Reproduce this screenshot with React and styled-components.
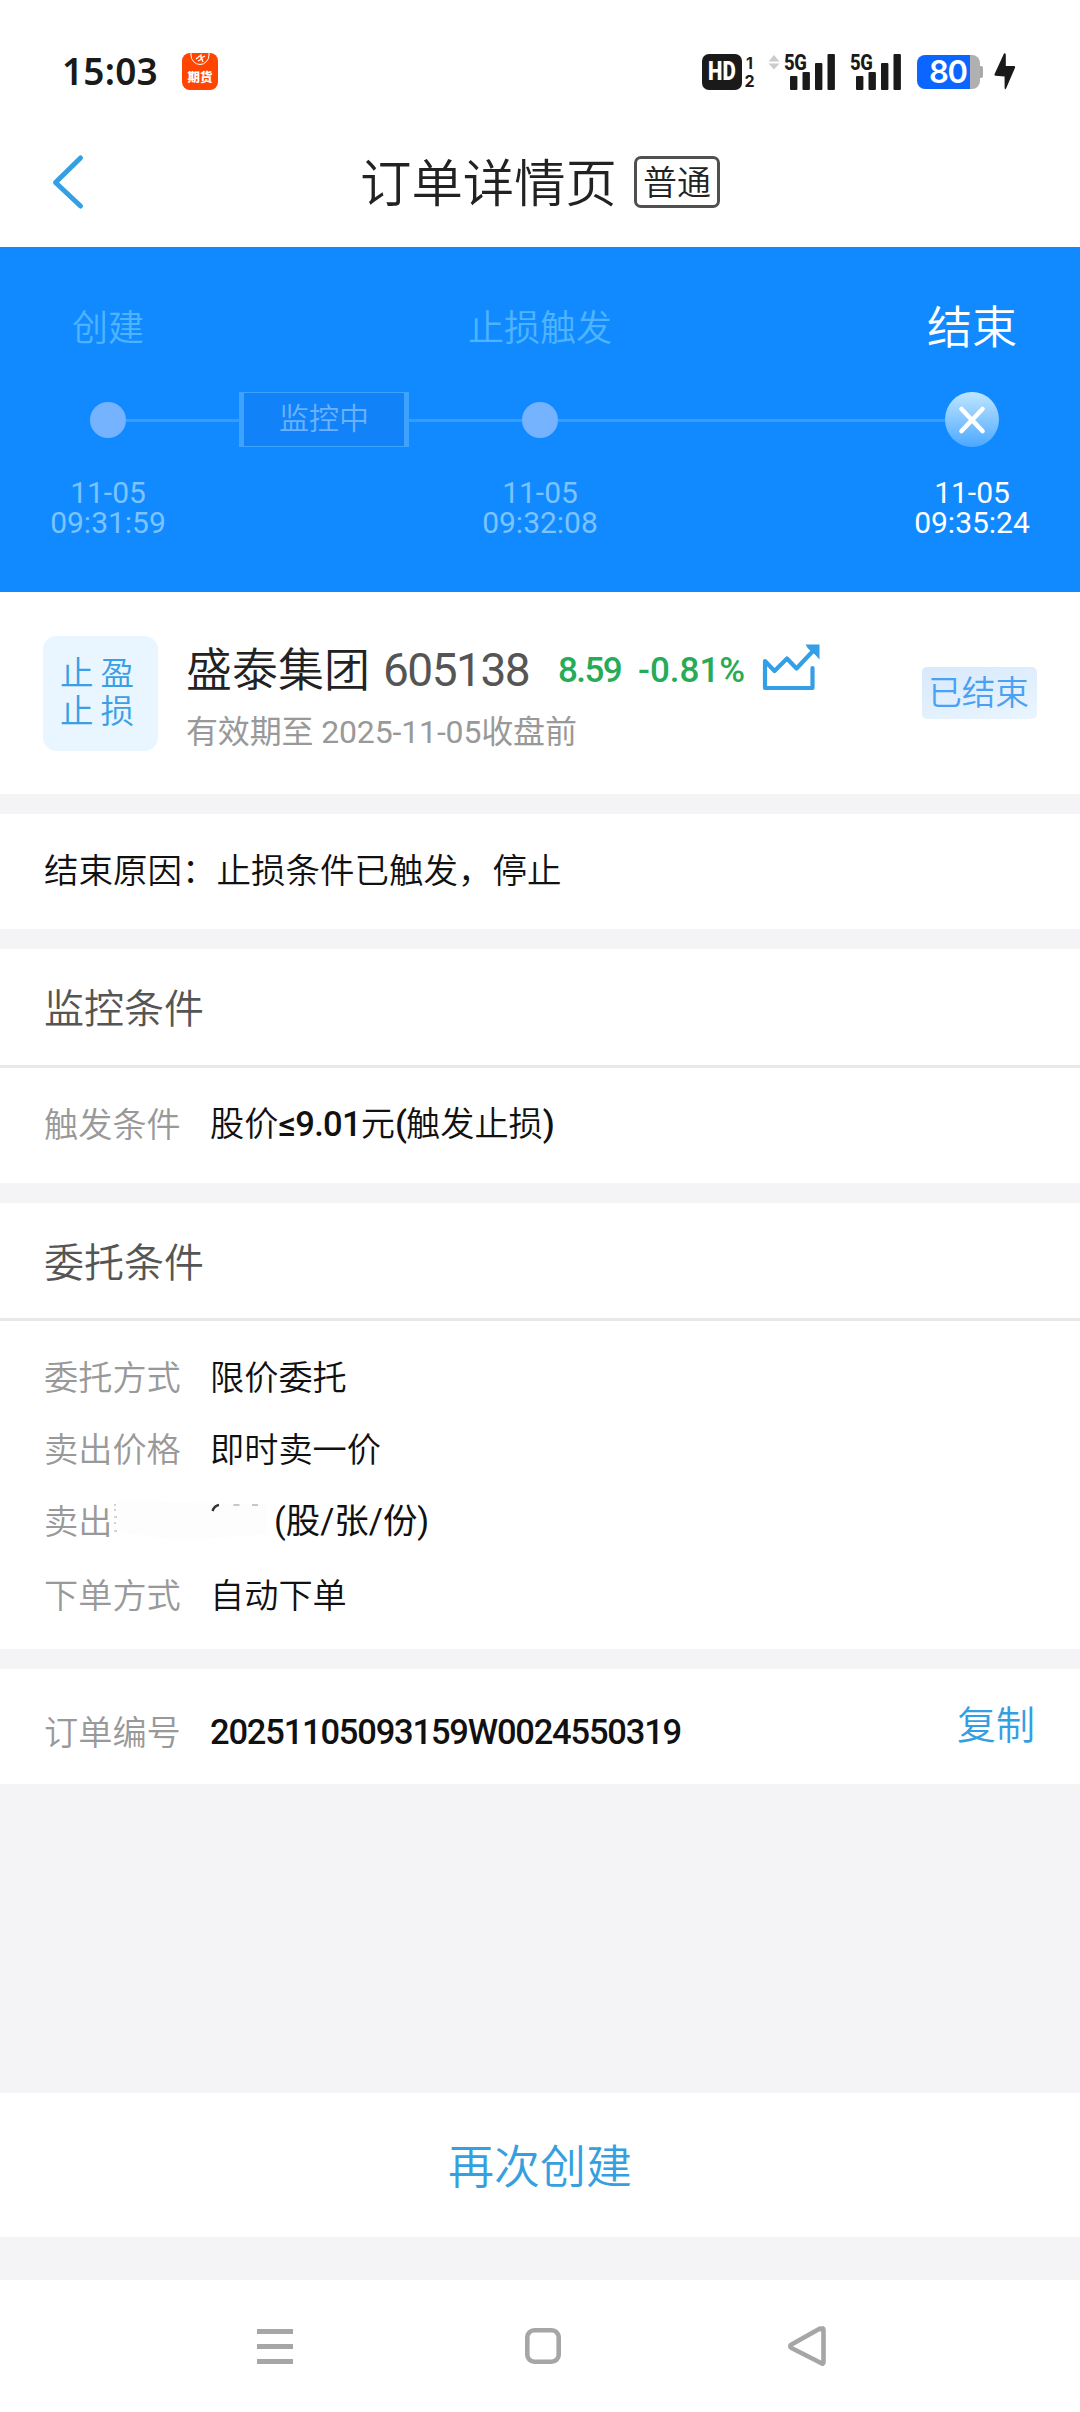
import React from "react";
import styled, { createGlobalStyle } from "styled-components";

const CJK = `"Noto Sans CJK SC", sans-serif`;

const Global = createGlobalStyle`
  * { box-sizing: border-box; }
  body { margin: 0; background: #f4f4f7; }
`;

const Page = styled.div`
  width: 1080px;
  height: 2412px;
  display: flex;
  flex-direction: column;
  background: #f4f4f7;
  font-family: Roboto, ${CJK};
  font-weight: 350;
  color: #111;
  overflow: hidden;
  white-space: nowrap;
`;

/* ---------- status bar ---------- */
const StatusBar = styled.div`
  height: 117px;
  padding: 26px 64px 0 62px;
  display: flex;
  align-items: center;
  background: #fff;
  flex: none;
`;
const Clock = styled.span`
  width: 97px;
  margin-top: -2px;
  font: 600 37px/46px "Noto Sans", sans-serif;
  color: #1a1a1a;
  letter-spacing: 0.2px;
`;
const AppIcon = styled.div`
  margin-left: 23px;
  width: 36px;
  height: 37px;
  border-radius: 8px;
  background: #ff4500;
  display: flex;
  flex-direction: column;
  align-items: center;
  overflow: hidden;
  svg { display: block; flex: none; }
`;
const AppIconText = styled.span`
  font: 900 12.5px/20px ${CJK};
  color: #fff;
`;
const Spacer = styled.div`
  flex: 1;
`;
const HdBox = styled.div`
  width: 40px;
  height: 36px;
  border-radius: 7px;
  background: #1a1a1a;
  color: #fff;
  display: flex;
  align-items: center;
  justify-content: center;
  font: 900 25px/36px Roboto, sans-serif;
  span { transform: scaleX(0.82); }
`;
const SimIndex = styled.div`
  width: 11px;
  margin-left: 2px;
  display: flex;
  flex-direction: column;
  font: 700 16px/18px Inter, sans-serif;
  color: #1a1a1a;
  align-items: center;
`;
const DataArrows = styled.svg`
  margin: -18px 0 0 13px;
`;
const SignalBox = styled.div`
  margin-left: ${(p) => p.$gap}px;
  width: 51px;
  height: 38px;
  display: flex;
  position: relative;
  svg { display: block; }
`;
const SignalLabel = styled.span`
  position: absolute;
  left: 0;
  top: -1px;
  font: 800 22.5px/20px Roboto, sans-serif;
  letter-spacing: -0.6px;
  transform: scaleX(0.82);
  transform-origin: left;
  color: #1a1a1a;
`;
const Battery = styled.div`
  margin-left: 16px;
  display: flex;
  align-items: center;
`;
const BatteryBody = styled.div`
  width: 63px;
  height: 34px;
  border-radius: 8px;
  background: linear-gradient(90deg, #0a66ff 53px, #b0b0b0 53px);
  padding-left: 12px;
  font: 600 31px/34px Inter, sans-serif;
  color: #fff;
  letter-spacing: -1.3px;
`;
const BatteryTip = styled.div`
  width: 3px;
  height: 12px;
  border-radius: 0 2px 2px 0;
  background: #a8a8a8;
`;
const Bolt = styled.svg`
  margin-left: 11px;
`;

/* ---------- title bar ---------- */
const TitleBar = styled.div`
  height: 130px;
  display: grid;
  grid-template-columns: 360px 1fr;
  align-items: center;
  background: #fff;
  flex: none;
`;
const BackButton = styled.div`
  padding-left: 50px;
  svg { display: block; }
`;
const TitleGroup = styled.div`
  display: flex;
  align-items: center;
`;
const Title = styled.span`
  width: 274px;
  margin-top: -5px;
  font: 350 51.4px/60px ${CJK};
  color: #222;
`;
const ModeTag = styled.span`
  width: 86px;
  height: 52px;
  border: 3px solid #505050;
  border-radius: 7px;
  font: 350 34px/43px ${CJK};
  color: #222;
  text-align: center;
`;

/* ---------- progress ---------- */
const Progress = styled.section`
  height: 345px;
  background: #118aff;
  display: flex;
  flex-direction: column;
  flex: none;
`;
const StepLabels = styled.div`
  height: 145px;
  padding-top: 48px;
  display: grid;
  grid-template-columns: 216px 1fr 216px;
  text-align: center;
`;
const StepLabel = styled.span`
  font: 350 ${(p) => (p.$active ? 45 : 36)}px/60px ${CJK};
  color: ${(p) => (p.$active ? "#fff" : "#4fb4ff")};
`;
const Track = styled.div`
  height: 55px;
  padding: 0 81px 0 90px;
  display: flex;
  align-items: center;
`;
const Dot = styled.div`
  width: 36px;
  height: 36px;
  border-radius: 50%;
  background: #75b3ff;
  flex: none;
`;
const Line = styled.div`
  height: 3px;
  flex: ${(p) => (p.$w ? `0 0 ${p.$w}px` : 1)};
  margin-top: 2px;
  background: #369cff;
`;
const Phase = styled.div`
  width: 170px;
  height: 55px;
  border: solid #3ea2ff;
  border-width: 1.5px 5px;
  background: #1282f8;
  font: 350 30px/46px ${CJK};
  color: #6cb1ff;
  text-align: center;
  flex: none;
`;
const EndMark = styled.div`
  width: 54px;
  height: 55px;
  border-radius: 50%;
  background: linear-gradient(#c0e6ff, #4ca8ff);
  display: flex;
  align-items: center;
  justify-content: center;
  flex: none;
`;
const StepTimes = styled.div`
  padding-top: 31px;
  display: grid;
  grid-template-columns: 216px 1fr 216px;
  text-align: center;
`;
const StepTime = styled.div`
  display: flex;
  flex-direction: column;
  font: 400 30px/30px Roboto, sans-serif;
  color: ${(p) => (p.$active ? "#fff" : "#7cc3ff")};
`;

/* ---------- stock ---------- */
const Stock = styled.section`
  height: 202px;
  padding: 44px 43px 0;
  display: flex;
  background: #fff;
  flex: none;
`;
const StockIcon = styled.div`
  width: 115px;
  height: 115px;
  border-radius: 14px;
  background: #e9f5ff;
  padding: 16px 0 0 17px;
  display: flex;
  flex-direction: column;
  font: 350 33.5px/37.5px ${CJK};
  letter-spacing: 7px;
  color: #3a9fe5;
`;
const StockInfo = styled.div`
  margin-left: 28px;
  flex: 1;
`;
const StockTop = styled.div`
  height: 64px;
  display: flex;
  align-items: center;
`;
const StockName = styled.span`
  width: 197px;
  margin-top: -4px;
  font: 350 46px/60px ${CJK};
  color: #222;
`;
const StockCode = styled.span`
  width: 175px;
  padding-top: 4px;
  font: 450 46px/60px Roboto, sans-serif;
  letter-spacing: -1.5px;
  color: #555;
`;
const Quote = styled.span`
  width: ${(p) => p.$w}px;
  font: 500 35px/60px Roboto, sans-serif;
  letter-spacing: ${(p) => p.$ls}px;
  padding-top: 6px;
  color: #27ab57;
`;
const TrendIcon = styled.svg`
  margin: -3px 0 0 2px;
`;
const Validity = styled.div`
  margin-top: 9px;
  font: 400 32px/46px Roboto, ${CJK};
  letter-spacing: -0.15px;
  color: #999;
`;
const StateTag = styled.span`
  margin-top: 31px;
  padding-right: 2px;
  width: 115px;
  height: 52px;
  border-radius: 5px;
  background: linear-gradient(165deg, #d8e9fb, #eaf5ff);
  font: 350 33.6px/47px ${CJK};
  text-align: center;
  color: #4aa1f3;
`;

/* ---------- detail sections ---------- */
const Card = styled.section`
  margin-top: 20px;
  background: #fff;
  flex: none;
`;
const Reason = styled.p`
  margin: 0;
  height: 115px;
  padding-left: 44px;
  font: 350 34.5px/109px ${CJK};
`;
const CardTitle = styled.h2`
  margin: 0;
  height: ${(p) => p.$h}px;
  padding-left: 44px;
  border-bottom: 3px solid #e8e8e8;
  font: 350 40px/115px ${CJK};
  color: #555;
`;
const Fields = styled.div`
  padding: ${(p) => p.$pad};
  display: flex;
  flex-direction: column;
`;
const Field = styled.div`
  height: ${(p) => p.$h || 72}px;
  display: flex;
  align-items: center;
  font: 350 34.2px/50px ${CJK};
`;
const FieldName = styled.span`
  width: ${(p) => p.$w || 166}px;
  color: #999;
`;
const FieldValue = styled.span`
  color: #111;
`;
const Num = styled.span`
  font: 500 34.5px/50px Roboto, sans-serif;
  letter-spacing: ${(p) => p.$ls}px;
  padding-top: ${(p) => p.$drop || 0}px;
`;
const Unit = styled.span`
  margin-left: 5px;
  padding-top: 3px;
  font: 400 34.4px/50px Roboto, ${CJK};
`;
const Redacted = styled.svg`
  flex: none;
`;
const Copy = styled.span`
  margin: -15px 7px 0 auto;
  font: 350 39px/50px ${CJK};
  color: #349ee2;
`;

/* ---------- bottom ---------- */
const CreateAgain = styled.div`
  margin-top: 309px;
  height: 144px;
  background: #fff;
  color: #359fe0;
  font: 350 46px/140px ${CJK};
  text-align: center;
  flex: none;
`;
const NavBar = styled.nav`
  margin-top: 43px;
  height: 132px;
  padding: 0 253px 0 255px;
  background: #fff;
  display: flex;
  align-items: center;
  justify-content: space-between;
  flex: none;
`;

const Signal = ({ gap }) => (
  <SignalBox $gap={gap}>
    <SignalLabel>5G</SignalLabel>
    <svg width="51" height="38" viewBox="0 0 51 38" fill="#1a1a1a">
      <rect x="6" y="23" width="7.4" height="14" rx="1" />
      <rect x="18.5" y="19" width="7.4" height="18" rx="1" />
      <rect x="31" y="10" width="7.4" height="27" rx="1" />
      <rect x="43.5" y="1" width="7.4" height="36" rx="1" />
    </svg>
  </SignalBox>
);

export default function App() {
  return (
    <Page>
      <Global />
      <StatusBar>
        <Clock>15:03</Clock>
        <AppIcon>
          <svg width="24" height="14" viewBox="0 0 24 14" fill="none" stroke="#fff">
            <path d="M3 0v2a9 9.5 0 0 0 18 0V0" />
            <path d="M8 6l5-4v3l4-2M10 8l4-2 1 3" strokeWidth="1.3" />
          </svg>
          <AppIconText>期货</AppIconText>
        </AppIcon>
        <Spacer />
        <HdBox><span>HD</span></HdBox>
        <SimIndex>
          <span>1</span>
          <span>2</span>
        </SimIndex>
        <DataArrows width="12" height="17" viewBox="0 0 12 17" fill="#ccc">
          <path d="M0.5 7.500L6 1l5.500 6.500zM0.500 9.500h11L6 15.500z" />
        </DataArrows>
        <Signal gap={4} />
        <Signal gap={15} />
        <Battery>
          <BatteryBody>80</BatteryBody>
          <BatteryTip />
        </Battery>
        <Bolt width="22" height="37" viewBox="0 0 22 37" fill="#1a1a1a">
          <path d="M10 0.500L0.600 21q-.5 1.500 1 1.700l9 .8V35q.5 2.500 1.700 0L21 14.800q.6-1.500-1-1.700h-8.200V1.500q-.6-2-1.800-1z" />
        </Bolt>
      </StatusBar>

      <TitleBar>
        <BackButton>
          <svg width="36" height="56" viewBox="0 0 36 56" fill="none" stroke="#359fe3" strokeWidth="5" strokeLinecap="round" strokeLinejoin="round">
            <path d="M30.500 4L5.500 28.500L30.500 52" />
          </svg>
        </BackButton>
        <TitleGroup>
          <Title>订单详情页</Title>
          <ModeTag>普通</ModeTag>
        </TitleGroup>
      </TitleBar>

      <Progress>
        <StepLabels>
          <StepLabel>创建</StepLabel>
          <StepLabel>止损触发</StepLabel>
          <StepLabel $active>结束</StepLabel>
        </StepLabels>
        <Track>
          <Dot />
          <Line $w={113} />
          <Phase>监控中</Phase>
          <Line $w={113} />
          <Dot />
          <Line />
          <EndMark>
            <svg width="30" height="30" viewBox="0 0 30 30" stroke="#fff" strokeWidth="4.600" strokeLinecap="round">
              <path d="M4.500 4l21 22M25.500 4l-21 22" />
            </svg>
          </EndMark>
        </Track>
        <StepTimes>
          <StepTime><span>11-05</span><span>09:31:59</span></StepTime>
          <StepTime><span>11-05</span><span>09:32:08</span></StepTime>
          <StepTime $active><span>11-05</span><span>09:35:24</span></StepTime>
        </StepTimes>
      </Progress>

      <Stock>
        <StockIcon>
          <span>止盈</span>
          <span>止损</span>
        </StockIcon>
        <StockInfo>
          <StockTop>
            <StockName>盛泰集团</StockName>
            <StockCode>605138</StockCode>
            <Quote $w={80} $ls={-1.6}>8.59</Quote>
            <Quote $w={121} $ls={0}>-0.81%</Quote>
            <TrendIcon width="60" height="50" viewBox="0 0 60 50" fill="none" stroke="#349fe6" strokeWidth="4.200" strokeLinejoin="round" strokeLinecap="round">
              <path d="M51.500 26V46H4V19L13.500 29L26 16.500L35.500 26.500L51 10" />
              <path d="M44.500 2.500H58.500V17.500Q54 12 50 9.500Q46 6 44.500 2.500z" fill="#349fe6" stroke="none" />
            </TrendIcon>
          </StockTop>
          <Validity>有效期至 2025-11-05收盘前</Validity>
        </StockInfo>
        <StateTag>已结束</StateTag>
      </Stock>

      <Card>
        <Reason>结束原因：止损条件已触发，停止</Reason>
      </Card>

      <Card>
        <CardTitle $h={119}>监控条件</CardTitle>
        <Fields $pad="0 38px 7px 44px">
          <Field $h={108}>
            <FieldName>触发条件</FieldName>
            <FieldValue>
              股价<Num $ls={-0.7}>≤9.01</Num>元<Num $ls={-1}>(</Num>触发止损<Num $ls={-1}>)</Num>
            </FieldValue>
          </Field>
        </Fields>
      </Card>

      <Card>
        <CardTitle $h={118}>委托条件</CardTitle>
        <Fields $pad="18px 38px 19px 44px">
          <Field>
            <FieldName>委托方式</FieldName>
            <FieldValue>限价委托</FieldValue>
          </Field>
          <Field>
            <FieldName>卖出价格</FieldName>
            <FieldValue>即时卖一价</FieldValue>
          </Field>
          <Field>
            <FieldName $w={69}>卖出</FieldName>
            <Redacted width="156" height="50" viewBox="0 0 156 50" fill="none">
              <path d="M4 6L154 11V40L70 47L6 38z" fill="#fdfdfd" />
              <path d="M1 11h2M1 16h2M1 23h3M1 29h2M1 37h3" stroke="#c4c4c4" strokeWidth="1.500" />
              <path d="M99.500 17Q101.500 11.500 106 11" stroke="#333" strokeWidth="2.500" />
              <path d="M120.500 11h6M139 11h6" stroke="#b5b5b5" strokeWidth="1.500" />
            </Redacted>
            <Unit>(股/张/份)</Unit>
          </Field>
          <Field $h={75}>
            <FieldName>下单方式</FieldName>
            <FieldValue>自动下单</FieldValue>
          </Field>
        </Fields>
      </Card>

      <Card>
        <Fields $pad="6px 38px 0 44px">
          <Field $h={109}>
            <FieldName>订单编号</FieldName>
            <Num $ls={-1.2} $drop={5}>20251105093159W0024550319</Num>
            <Copy>复制</Copy>
          </Field>
        </Fields>
      </Card>

      <CreateAgain>再次创建</CreateAgain>

      <NavBar>
        <svg width="40" height="42" viewBox="0 0 40 42" fill="#a6a6a6">
          <path d="M2 4h36v5H2zM2 19h36v5H2zM2 34h36v5H2z" />
        </svg>
        <svg width="40" height="42" viewBox="0 0 40 42" fill="none" stroke="#a6a6a6" strokeWidth="4.600">
          <rect x="6.300" y="5.300" width="31.400" height="31.400" rx="7" />
        </svg>
        <svg width="40" height="42" viewBox="0 0 40 42" fill="none" stroke="#a6a6a6" strokeWidth="4.600" strokeLinejoin="round">
          <path d="M34.700 4.500Q36.500 2 36.500 5V37Q36.500 40 34 38L4.500 23Q2 21 4.500 19.500L33 3.500z" />
        </svg>
      </NavBar>
    </Page>
  );
}
